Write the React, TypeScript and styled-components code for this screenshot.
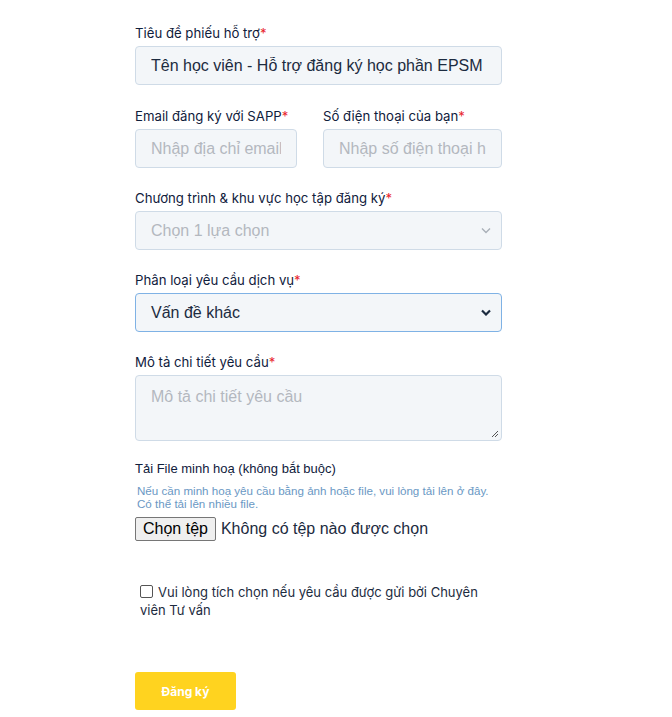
import React from "react";
import styled, { createGlobalStyle } from "styled-components";

const GlobalStyle = createGlobalStyle`
  body {
    margin: 0;
    background: #ffffff;
  }
`;

const Page = styled.div`
  width: 672px;
  min-height: 717px;
  padding: 25px 0 0 135px;
  box-sizing: border-box;
`;

const Form = styled.form`
  width: 367px;
  display: flex;
  flex-direction: column;
`;

const Row = styled.div`
  display: grid;
  grid-template-columns: 162px 179px;
  column-gap: 26px;
`;

const Group = styled.div<{ $gap?: number }>`
  display: flex;
  flex-direction: column;
  margin-bottom: ${(p) => p.$gap ?? 22}px;
`;

const Label = styled.label`
  font-family: Inter, "Noto Sans", sans-serif;
  font-size: 13.2px;
  line-height: 16px;
  color: #10203c;
  margin-bottom: 5px;
  white-space: nowrap;
`;

const Star = styled.span`
  color: #e8232b;
`;

const fieldBase = `
  box-sizing: border-box;
  width: 100%;
  background: #f3f6f9;
  border: 1px solid #cfdbe7;
  border-radius: 4px;
  font-family: "Liberation Sans", Arial, sans-serif;
  font-size: 16px;
  color: #1c2b40;
  outline: none;
`;

const Input = styled.input`
  ${fieldBase}
  height: 39px;
  padding: 0 15px;
  &::placeholder {
    color: #b3b8bf;
  }
`;

const Select = styled.div<{ $active?: boolean }>`
  ${fieldBase}
  height: 39px;
  padding: 0 10px 0 15px;
  display: flex;
  align-items: center;
  justify-content: space-between;
  color: ${(p) => (p.$active ? "#1c2b40" : "#b3b8bf")};
  border-color: ${(p) => (p.$active ? "#7fb2e5" : "#cfdbe7")};
`;

const Chevron = styled.svg<{ $active?: boolean }>`
  width: 10px;
  height: 7px;
  stroke: ${(p) => (p.$active ? "#1c2b40" : "#a9b0b8")};
  stroke-width: ${(p) => (p.$active ? 2.2 : 1.4)};
  fill: none;
`;

const TextArea = styled.div`
  ${fieldBase}
  position: relative;
  height: 66px;
  padding: 12px 15px;
  color: #b3b8bf;
  line-height: 18px;
`;

const Grip = styled.svg`
  position: absolute;
  right: 2px;
  bottom: 2px;
  width: 8px;
  height: 8px;
  stroke: #555;
  stroke-width: 1;
`;

const PlainLabel = styled.div`
  font-family: "Liberation Sans", Arial, sans-serif;
  font-size: 13px;
  line-height: 16px;
  color: #10203c;
  margin-bottom: 7px;
`;

const Help = styled.div`
  font-family: "Liberation Sans", Arial, sans-serif;
  font-size: 11.6px;
  line-height: 13px;
  color: #6a98c4;
  padding-left: 2px;
  margin-bottom: 7px;
`;

const FileRow = styled.div`
  display: flex;
  align-items: center;
  gap: 5px;
  font-family: "Liberation Sans", Arial, sans-serif;
  font-size: 16px;
  color: #1c2b40;
`;

const FileButton = styled.button`
  font-family: "Liberation Sans", Arial, sans-serif;
  font-size: 16px;
  color: #000;
  height: 24px;
  padding: 0 7px;
  background: #efefef;
  border: 1px solid #767676;
  border-radius: 2px;
`;

const CheckWrap = styled.label`
  display: block;
  margin: 42px 0 0;
  padding-left: 5px;
  width: 350px;
  font-family: Inter, "Noto Sans", sans-serif;
  font-size: 13px;
  line-height: 18px;
  color: #1c2b40;
`;

const Box = styled.span`
  display: inline-block;
  width: 11px;
  height: 11px;
  border: 1px solid #555;
  border-radius: 2px;
  vertical-align: -1px;
  margin-right: 5px;
`;

const Submit = styled.button`
  margin-top: 53px;
  width: 101px;
  height: 38px;
  background: #ffd31f;
  border: none;
  border-radius: 3px;
  color: #ffffff;
  font-family: Inter, "Noto Sans", sans-serif;
  font-weight: 700;
  font-size: 12px;
`;

function Arrow({ active }: { active?: boolean }) {
  return (
    <Chevron $active={active} viewBox="0 0 10 7">
      <path d="M1 1.5 L5 5.5 L9 1.5" />
    </Chevron>
  );
}

export default function App() {
  return (
    <Page>
      <GlobalStyle />
      <Form>
        <Group $gap={23}>
          <Label>
            Tiêu đề phiếu hỗ trợ<Star>*</Star>
          </Label>
          <Input defaultValue="Tên học viên - Hỗ trợ đăng ký học phần EPSM" />
        </Group>
        <Row>
          <Group>
            <Label>
              Email đăng ký với SAPP<Star>*</Star>
            </Label>
            <Input placeholder="Nhập địa chỉ email" />
          </Group>
          <Group>
            <Label>
              Số điện thoại của bạn<Star>*</Star>
            </Label>
            <Input placeholder="Nhập số điện thoại học viên" />
          </Group>
        </Row>
        <Group>
          <Label>
            Chương trình &amp; khu vực học tập đăng ký<Star>*</Star>
          </Label>
          <Select>
            Chọn 1 lựa chọn
            <Arrow />
          </Select>
        </Group>
        <Group>
          <Label>
            Phân loại yêu cầu dịch vụ<Star>*</Star>
          </Label>
          <Select $active>
            Vấn đề khác
            <Arrow active />
          </Select>
        </Group>
        <Group $gap={20}>
          <Label>
            Mô tả chi tiết yêu cầu<Star>*</Star>
          </Label>
          <TextArea>
            Mô tả chi tiết yêu cầu
            <Grip viewBox="0 0 8 8">
              <path d="M7 1 L1 7 M7 4 L4 7" />
            </Grip>
          </TextArea>
        </Group>
        <PlainLabel>Tải File minh hoạ (không bắt buộc)</PlainLabel>
        <Help>
          Nếu cần minh hoạ yêu cầu bằng ảnh hoặc file, vui lòng tải lên ở đây.
          <br />
          Có thể tải lên nhiều file.
        </Help>
        <FileRow>
          <FileButton type="button">Chọn tệp</FileButton>
          Không có tệp nào được chọn
        </FileRow>
        <CheckWrap>
          <Box />
          Vui lòng tích chọn nếu yêu cầu được gửi bởi Chuyên viên Tư vấn
        </CheckWrap>
        <Submit type="button">Đăng ký</Submit>
      </Form>
    </Page>
  );
}
